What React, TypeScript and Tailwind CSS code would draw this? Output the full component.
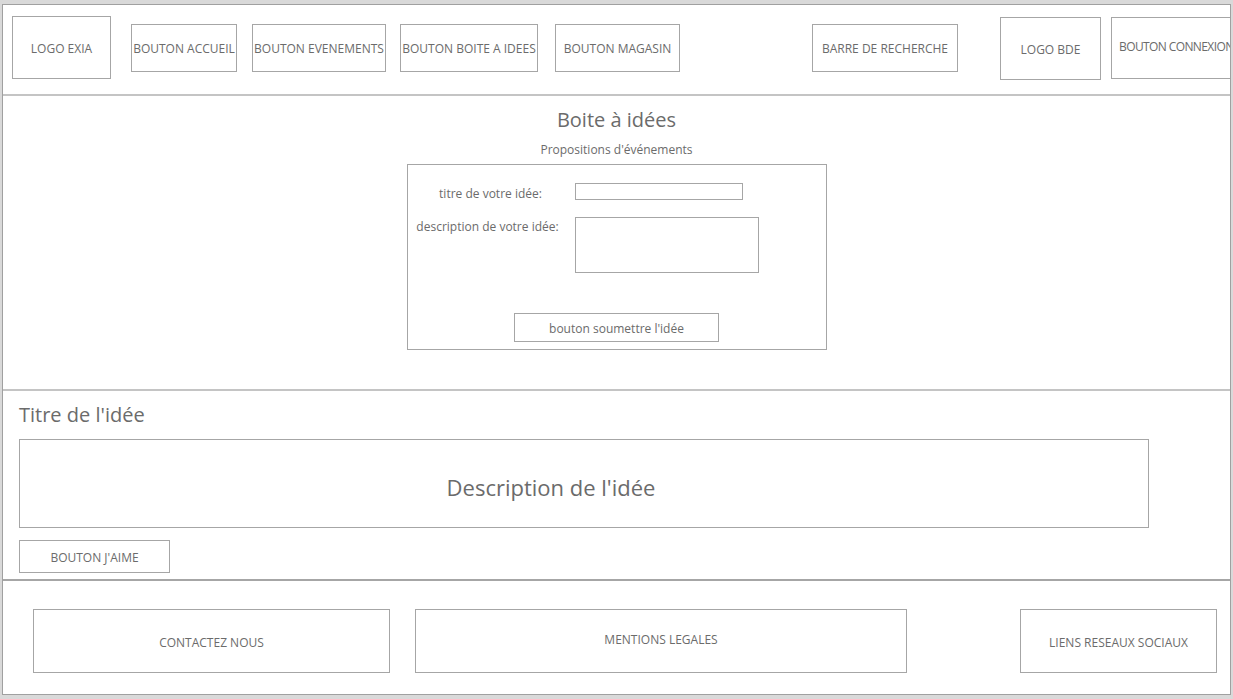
import React from "react";

const box = "shrink-0 border border-[#a6a6a6] bg-white flex items-center justify-center text-[12px] text-[#6b6b6b] whitespace-nowrap";

export default function App() {
  return (
    <div
      className="w-[1233px] h-[699px] bg-[#d9d9d9] pl-[2px] pt-[4px] pr-[2px] pb-[4px]"
      style={{ fontFamily: '"Open Sans", "Noto Sans", sans-serif' }}
    >
      <div className="w-full h-full border border-[#a0a0a0] bg-white flex flex-col overflow-hidden">
        {/* Header */}
        <div className="h-[91px] shrink-0 border-b-2 border-[#c4c4c4] flex items-start overflow-hidden">
          <div className={`${box} ml-[9px] mt-[11px] w-[99px] h-[63px] pt-[2px]`}>LOGO EXIA</div>
          <div className={`${box} ml-[20px] mt-[19px] w-[106px] h-[48px] pt-[2px]`}>BOUTON ACCUEIL</div>
          <div className={`${box} ml-[15px] mt-[19px] w-[134px] h-[48px] pt-[2px]`}>BOUTON EVENEMENTS</div>
          <div className={`${box} ml-[14px] mt-[19px] w-[138px] h-[48px] pt-[2px]`}>BOUTON BOITE A IDEES</div>
          <div className={`${box} ml-[17px] mt-[19px] w-[125px] h-[48px] pt-[2px]`}>BOUTON MAGASIN</div>
          <div className={`${box} ml-[132px] mt-[19px] w-[146px] h-[48px] pt-[2px]`}>BARRE DE RECHERCHE</div>
          <div className={`${box} ml-[42px] mt-[12px] w-[101px] h-[63px] pt-[2px]`}>LOGO BDE</div>
          <div className={`${box} ml-[10px] mt-[12px] w-[135px] h-[62px] !justify-start pl-[7px] pb-[2px] tracking-[-0.6px]`}>
            BOUTON CONNEXION
          </div>
        </div>

        {/* Boite a idees */}
        <div className="h-[295px] shrink-0 border-b-2 border-[#c4c4c4] flex flex-col items-center pt-[11px]">
          <div className="text-[20px] leading-[26px] text-[#6b6b6b]">Boite à idées</div>
          <div className="text-[12px] leading-[16px] text-[#6b6b6b] mt-[9px]">Propositions d'événements</div>
          <div className="mt-[6px] w-[420px] h-[186px] border border-[#a6a6a6] flex flex-col">
            <div className="flex items-start mt-[18px]">
              <div className="w-[167px] text-center text-[12px] leading-[16px] text-[#6b6b6b] pt-[3px] pr-[1px]">titre de votre idée:</div>
              <div className="w-[168px] h-[17px] border border-[#a6a6a6]" />
            </div>
            <div className="flex items-start mt-[15px]">
              <div className="w-[167px] text-center text-[12px] leading-[16px] text-[#6b6b6b] pt-[2px] pr-[7px]">description de votre idée:</div>
              <div className="w-[184px] h-[56px] border border-[#a6a6a6]" />
            </div>
            <div className={`${box} self-center mt-[40px] w-[205px] h-[29px] pt-[2px]`}>bouton soumettre l'idée</div>
          </div>
        </div>

        {/* Idee */}
        <div className="h-[190px] shrink-0 border-b-2 border-[#a6a6a6] pl-[16px] pt-[10px] flex flex-col">
          <div className="text-[20px] leading-[28px] text-[#6b6b6b]">Titre de l'idée</div>
          <div className="mt-[10px] w-[1130px] h-[89px] shrink-0 border border-[#a6a6a6] flex items-center justify-center text-[22px] text-[#6b6b6b] pr-[66px] pt-[8px]">
            Description de l'idée
          </div>
          <div className={`${box} mt-[12px] w-[151px] h-[33px] pt-[2px]`}>BOUTON J'AIME</div>
        </div>

        {/* Footer */}
        <div className="flex-1 flex items-start pt-[28px]">
          <div className={`${box} ml-[30px] w-[357px] h-[64px] pt-[4px]`}>CONTACTEZ NOUS</div>
          <div className={`${box} ml-[25px] w-[492px] h-[64px] pb-[2px]`}>MENTIONS LEGALES</div>
          <div className={`${box} ml-[113px] w-[197px] h-[64px] pt-[4px]`}>LIENS RESEAUX SOCIAUX</div>
        </div>
      </div>
    </div>
  );
}
